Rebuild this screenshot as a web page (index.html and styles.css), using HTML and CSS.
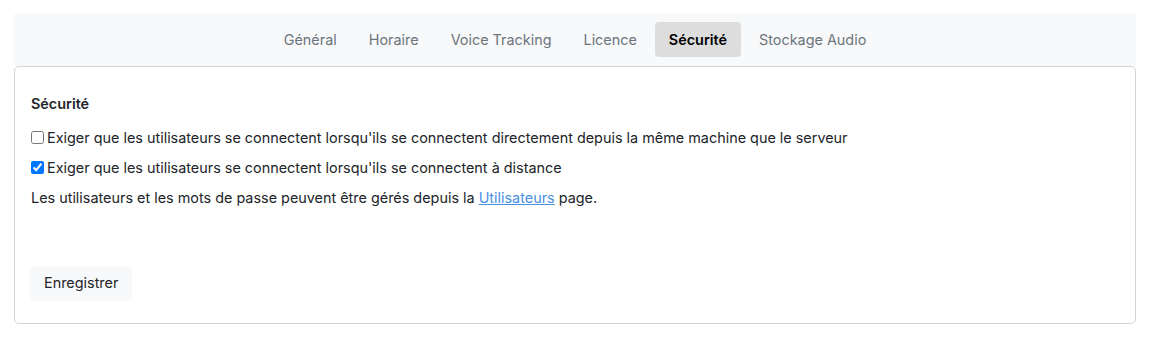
FILE: index.html
```html
<!DOCTYPE html>
<html lang="fr">
<head>
    <meta charset="UTF-8">
    <meta name="viewport" content="width=device-width, initial-scale=1.0">
    <title>Paramètres - Sécurité</title>
    <link rel="stylesheet" href="styles.css">
</head>
<body>
    <nav class="tabs">
        <a class="tab" href="#">Général</a>
        <a class="tab" href="#">Horaire</a>
        <a class="tab" href="#">Voice Tracking</a>
        <a class="tab" href="#">Licence</a>
        <a class="tab active" href="#">Sécurité</a>
        <a class="tab" href="#">Stockage Audio</a>
    </nav>
    <div class="card">
        <h3>Sécurité</h3>
        <label class="check">
            <input type="checkbox">
            Exiger que les utilisateurs se connectent lorsqu'ils se connectent directement depuis la même machine que le serveur
        </label>
        <label class="check">
            <input type="checkbox" checked>
            Exiger que les utilisateurs se connectent lorsqu'ils se connectent à distance
        </label>
        <p class="note">Les utilisateurs et les mots de passe peuvent être gérés depuis la <a href="#">Utilisateurs</a> page.</p>
        <button class="btn">Enregistrer</button>
    </div>
</body>
</html>
```

FILE: styles.css
```css
body {
    margin: 14px;
    font-family: Inter, "Noto Sans", sans-serif;
    font-size: 14.4px;
    line-height: 1.5;
    color: #212529;
    background-color: white;
}
.tabs {
    display: flex;
    justify-content: center;
    gap: 4px;
    background-color: #f8f9fa;
    padding: 8px 0 9px;
}
.tab {
    padding: 6.7px 14px;
    color: #6c757d;
    text-decoration: none;
    border-radius: 4px;
}
.tab.active {
    background-color: #dddddd;
    color: #000;
    font-weight: 600;
}
.card {
    border: 1px solid #d4d4d4;
    border-radius: 5px;
    padding: 26px 16px 22px;
}
.card h3 {
    font-size: 14.4px;
    font-weight: 600;
    margin: 0 0 12.6px;
}
.check {
    display: flex;
    align-items: center;
    margin-bottom: 8.4px;
}
.check input {
    margin: 0 3px 0 0;
    width: 13px;
    height: 13px;
}
.note {
    margin: 0 0 57px;
}
.note a {
    color: #4a90e2;
}
.btn {
    font-family: inherit;
    font-size: 14.4px;
    line-height: 1.5;
    color: #212529;
    background-color: #f8f9fa;
    border: none;
    border-radius: 5px;
    padding: 6.7px 14px;
    margin-left: -1px;
}
```
